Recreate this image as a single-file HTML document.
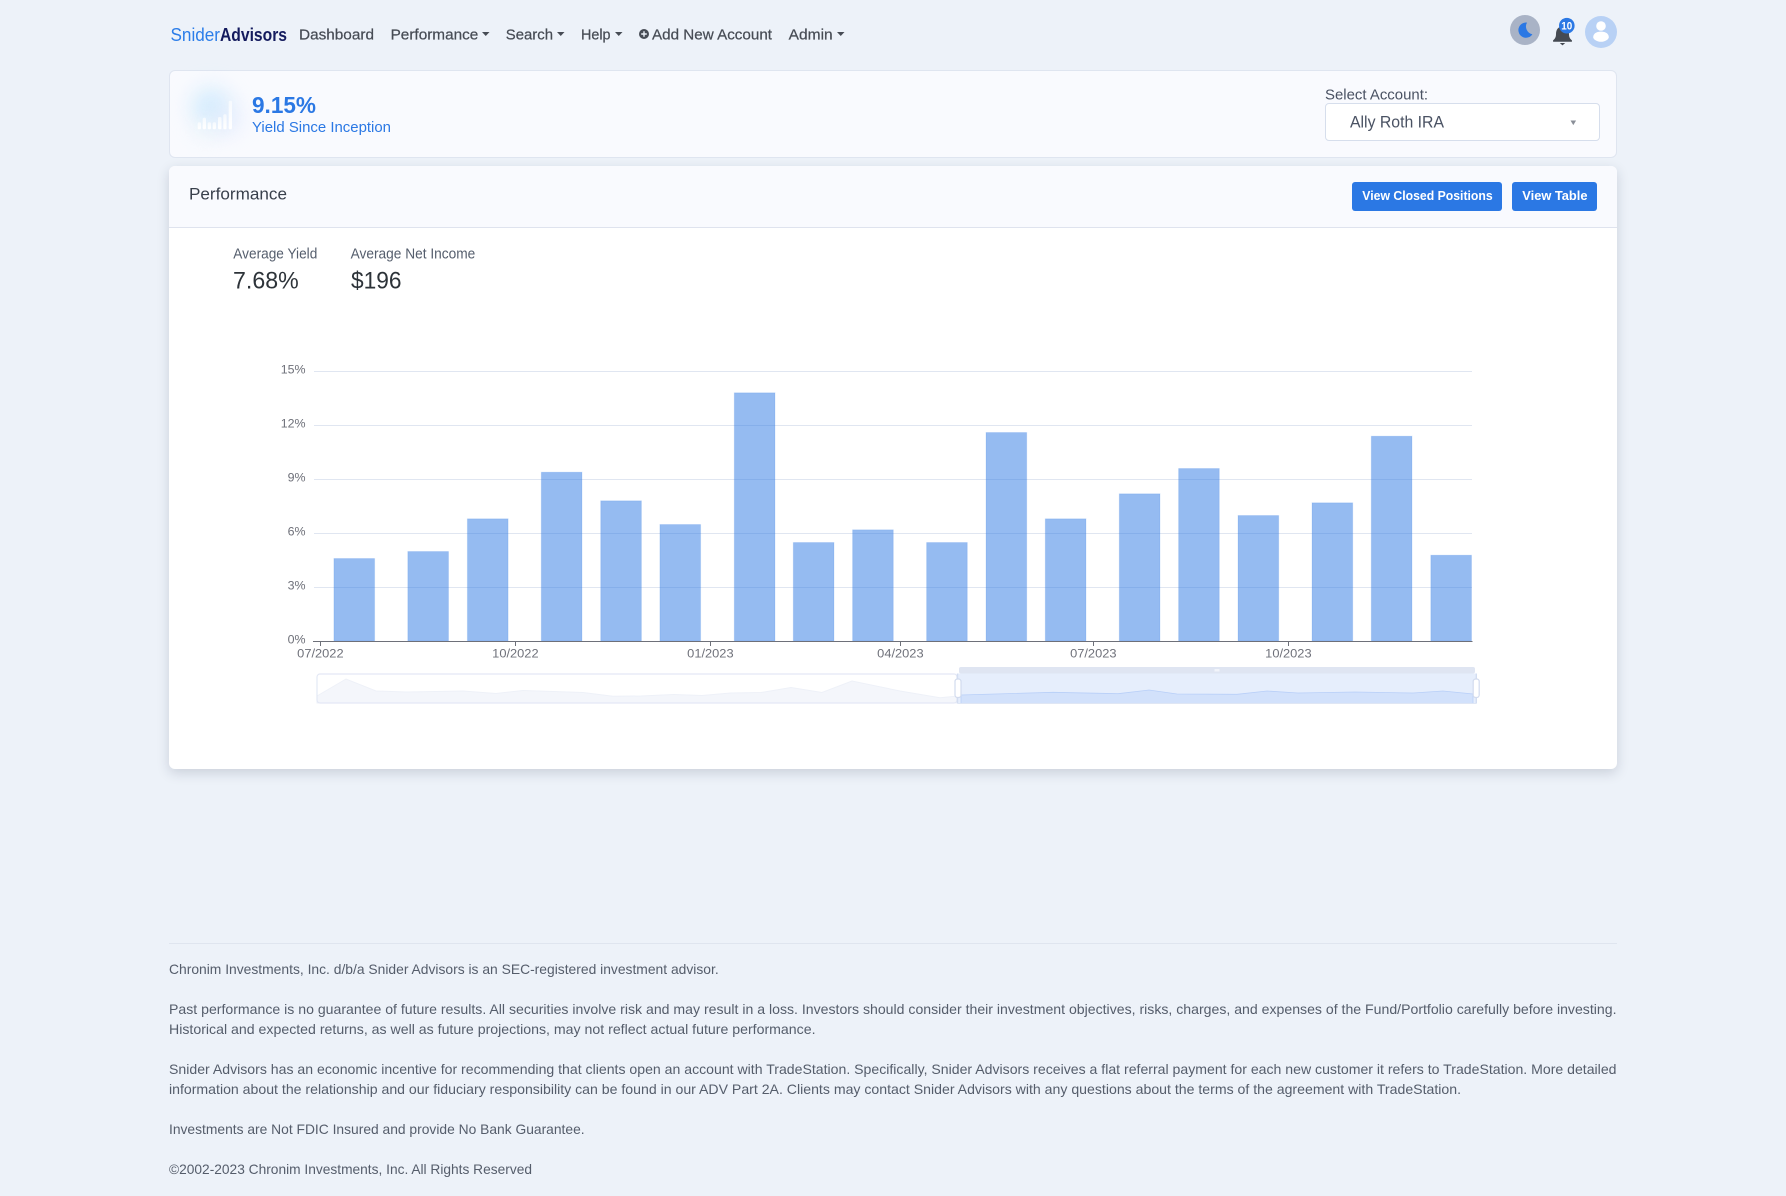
<!DOCTYPE html>
<html lang="en">
<head>
<meta charset="utf-8">
<title>Snider Advisors - Performance</title>
<style>
html,body{margin:0;padding:0;width:1786px;height:1196px;overflow:hidden;background:#edf2f9;font-family:"Liberation Sans",sans-serif}
.box{position:absolute;box-sizing:border-box}
.stat{left:169px;top:70px;width:1448px;height:88px;background:#f9fafe;border:1px solid #dfe5f0;border-radius:6px}
.card{left:169px;top:166px;width:1448px;height:603px;background:#fff;border-radius:6px;box-shadow:0 4px 12px rgba(30,40,70,.17)}
.cardhead{left:0;top:0;width:1448px;height:62px;background:#f9fafe;border-bottom:1px solid #dfe3ee;border-radius:6px 6px 0 0}
.select{left:1325px;top:103px;width:275px;height:38px;background:#fff;border:1px solid #d6deec;border-radius:4px}
.btn{background:#2b78e4;border-radius:3px;top:182px;height:29px}
.hr{left:169px;top:943px;width:1448px;height:1px;background:#dfe5ef}
.blob{border-radius:50%;filter:blur(11px)}
svg{position:absolute;left:0;top:0}
text{font-family:"Liberation Sans",sans-serif}
.nav{font-size:14.6px;fill:#474c55;stroke:#474c55;stroke-width:.22px}
.foot{font-size:13.6px;fill:#555d6b}
.ax{font-size:12.4px;fill:#6e7079}
</style>
</head>
<body>
<div class="box stat"></div>
<div class="box blob" style="left:192px;top:88px;width:38px;height:38px;background:#d3ecfd"></div>
<div class="box blob" style="left:214px;top:106px;width:24px;height:26px;background:#e2eafd"></div>
<div class="box blob" style="left:197px;top:126px;width:16px;height:12px;background:#e8f6f6"></div>
<div class="box select"></div>
<div class="box card"><div class="box cardhead"></div></div>
<div class="box btn" style="left:1352px;width:150px"></div>
<div class="box btn" style="left:1512px;width:85px"></div>
<div class="box hr"></div>

<svg width="1786" height="1196" viewBox="0 0 1786 1196" xmlns="http://www.w3.org/2000/svg">
<defs>
<linearGradient id="fade" x1="0" y1="0" x2="0" y2="1"><stop offset="0" stop-color="#fff" stop-opacity=".6"/><stop offset="1" stop-color="#fff" stop-opacity="1"/></linearGradient>
</defs>

<!-- nav -->
<text x="170.5" y="41" font-size="18" fill="#2b7de9" textLength="49.5" lengthAdjust="spacingAndGlyphs">Snider</text>
<text x="220" y="41" font-size="18" font-weight="700" fill="#141b5e" textLength="67" lengthAdjust="spacingAndGlyphs">Advisors</text>
<text class="nav" x="299" y="39.3" textLength="75" lengthAdjust="spacingAndGlyphs">Dashboard</text>
<text class="nav" x="390.6" y="39.3" textLength="87.7" lengthAdjust="spacingAndGlyphs">Performance</text>
<path d="M482 32h7.5l-3.75 4z" fill="#474c55"/>
<text class="nav" x="505.8" y="39.3" textLength="47.2" lengthAdjust="spacingAndGlyphs">Search</text>
<path d="M557 32h7.5l-3.75 4z" fill="#474c55"/>
<text class="nav" x="581" y="39.3" textLength="29.5" lengthAdjust="spacingAndGlyphs">Help</text>
<path d="M615 32h7.5l-3.75 4z" fill="#474c55"/>
<circle cx="644" cy="34" r="5" fill="#474c55"/><path d="M644 31.2v5.6M641.2 34h5.6" stroke="#edf2f9" stroke-width="1.4"/>
<text class="nav" x="652" y="39.3" textLength="120" lengthAdjust="spacingAndGlyphs">Add New Account</text>
<text class="nav" x="788.7" y="39.3" textLength="44" lengthAdjust="spacingAndGlyphs">Admin</text>
<path d="M837 32h7.5l-3.75 4z" fill="#474c55"/>

<!-- top right icons -->
<circle cx="1525" cy="30" r="15" fill="#a9b3c6"/>
<path d="M1527 22.6a7.6 7.6 0 1 0 5.4 11.6a7.8 7.8 0 0 1-5.4-11.6z" fill="#2b78e4"/>
<path d="M1562.5 26.5c-4.6 0-6.5 3.6-6.5 7.6c0 3-1 4.6-2.9 6.2v1.4h18.8v-1.4c-1.9-1.6-2.9-3.2-2.9-6.2c0-4-1.9-7.6-6.5-7.6z" fill="#454a52"/>
<path d="M1559.8 43h5.4l-2.7 2.4z" fill="#454a52"/>
<circle cx="1566.8" cy="25.7" r="7.8" fill="#2b78e4"/>
<text x="1566.8" y="29.6" font-size="11" font-weight="700" fill="#fff" text-anchor="middle" textLength="11" lengthAdjust="spacingAndGlyphs">10</text>
<circle cx="1601" cy="32" r="16" fill="#b8d1f5"/>
<circle cx="1601" cy="26" r="4.8" fill="#fff"/>
<path d="M1593.2 37.2c0-3.4 3-5.6 7.8-5.6s7.8 2.2 7.8 5.6c0 2-3.6 4.6-7.8 4.6s-7.8-2.6-7.8-4.6z" fill="#fff"/>

<!-- stat -->
<g fill="url(#fade)">
<rect x="197.7" y="122.3" width="3.3" height="7" rx="1.4"/>
<rect x="202.7" y="117.7" width="3.3" height="11.6" rx="1.4"/>
<rect x="207.7" y="122.3" width="3.3" height="7" rx="1.4"/>
<rect x="212.7" y="122.3" width="3.3" height="7" rx="1.4"/>
<rect x="218" y="117" width="3.5" height="12.3" rx="1.4"/>
<rect x="223.3" y="114.3" width="3.3" height="15" rx="1.4"/>
<rect x="228.7" y="100.7" width="3.3" height="28.6" rx="1.4"/>
</g>
<text x="252" y="112.8" font-size="23" font-weight="700" fill="#2b78e4" textLength="64" lengthAdjust="spacingAndGlyphs">9.15%</text>
<text x="252" y="132" font-size="14.6" fill="#2b78e4" textLength="139" lengthAdjust="spacingAndGlyphs">Yield Since Inception</text>
<text x="1325" y="99.4" font-size="14.4" fill="#4a5263" textLength="103" lengthAdjust="spacingAndGlyphs">Select Account:</text>
<text x="1350" y="127.6" font-size="16.8" fill="#4a5263" textLength="94" lengthAdjust="spacingAndGlyphs">Ally Roth IRA</text>
<path d="M1570.5 120.5h5.6l-2.8 4.6z" fill="#8a8f98"/>

<!-- card header -->
<text x="189" y="199.5" font-size="17" fill="#39404c" textLength="98" lengthAdjust="spacingAndGlyphs">Performance</text>
<text x="1362.3" y="200" font-size="13" font-weight="700" fill="#fff" textLength="130.4" lengthAdjust="spacingAndGlyphs">View Closed Positions</text>
<text x="1522.3" y="200" font-size="13" font-weight="700" fill="#fff" textLength="65.2" lengthAdjust="spacingAndGlyphs">View Table</text>

<!-- summary -->
<text x="233.3" y="258.3" font-size="14.4" fill="#555e6d" textLength="84" lengthAdjust="spacingAndGlyphs">Average Yield</text>
<text x="350.6" y="258.3" font-size="14.4" fill="#555e6d" textLength="124.7" lengthAdjust="spacingAndGlyphs">Average Net Income</text>
<text x="233" y="288.3" font-size="24" fill="#2d3339" textLength="65.7" lengthAdjust="spacingAndGlyphs">7.68%</text>
<text x="351" y="288.3" font-size="24" fill="#2d3339" textLength="50.5" lengthAdjust="spacingAndGlyphs">$196</text>

<!-- chart grid -->
<g fill="#e0e6f1">
<rect x="314" y="371" width="1158" height="1"/>
<rect x="314" y="425" width="1158" height="1"/>
<rect x="314" y="479" width="1158" height="1"/>
<rect x="314" y="533" width="1158" height="1"/>
<rect x="314" y="587" width="1158" height="1"/>
</g>
<g class="ax" text-anchor="end">
<text x="305.5" y="373.7">15%</text>
<text x="305.5" y="427.7">12%</text>
<text x="305.5" y="481.7">9%</text>
<text x="305.5" y="535.7">6%</text>
<text x="305.5" y="589.7">3%</text>
<text x="305.5" y="643.7">0%</text>
</g>

<!-- bars -->
<g transform="translate(.3 .5)" fill="#2b78e4" fill-opacity=".5" stroke="#2b78e4" stroke-opacity=".14" stroke-width="1">
<rect x="333.6" y="558" width="40.7" height="82.5"/>
<rect x="407.5" y="551" width="40.7" height="89.5"/>
<rect x="467.1" y="518.3" width="40.7" height="122.2"/>
<rect x="541" y="471.7" width="40.7" height="168.8"/>
<rect x="600.4" y="500.3" width="40.7" height="140.2"/>
<rect x="659.6" y="524" width="40.7" height="116.5"/>
<rect x="734" y="392.3" width="40.7" height="248.2"/>
<rect x="793" y="542" width="40.7" height="98.5"/>
<rect x="852.3" y="529.3" width="40.7" height="111.2"/>
<rect x="926.3" y="542" width="40.7" height="98.5"/>
<rect x="985.7" y="432" width="40.7" height="208.5"/>
<rect x="1045" y="518.3" width="40.7" height="122.2"/>
<rect x="1119" y="493.3" width="40.7" height="147.2"/>
<rect x="1178.3" y="468" width="40.7" height="172.5"/>
<rect x="1237.7" y="515" width="40.7" height="125.5"/>
<rect x="1311.7" y="502.3" width="40.7" height="138.2"/>
<rect x="1371" y="435.7" width="40.7" height="204.8"/>
<rect x="1430.5" y="554.7" width="40.7" height="85.8"/>
</g>

<!-- axis -->
<rect x="313" y="641" width="1159.5" height="1" fill="#6e7079"/>
<g fill="#6e7079">
<rect x="320" y="642" width="1" height="4"/>
<rect x="515" y="642" width="1" height="4"/>
<rect x="710" y="642" width="1" height="4"/>
<rect x="900" y="642" width="1" height="4"/>
<rect x="1093" y="642" width="1" height="4"/>
<rect x="1288" y="642" width="1" height="4"/>
</g>
<g class="ax">
<text x="297.2" y="657.7" textLength="46.4" lengthAdjust="spacingAndGlyphs">07/2022</text>
<text x="492.2" y="657.7" textLength="46.4" lengthAdjust="spacingAndGlyphs">10/2022</text>
<text x="687.2" y="657.7" textLength="46.4" lengthAdjust="spacingAndGlyphs">01/2023</text>
<text x="877.2" y="657.7" textLength="46.4" lengthAdjust="spacingAndGlyphs">04/2023</text>
<text x="1070.1" y="657.7" textLength="46.4" lengthAdjust="spacingAndGlyphs">07/2023</text>
<text x="1265.2" y="657.7" textLength="46.4" lengthAdjust="spacingAndGlyphs">10/2023</text>
</g>

<!-- datazoom -->
<path d="M317 696L346 679L376 691L406 692L436 691.5L463 691L496 693.5L523 690.5L553 691.5L583 692.5L613 696.3L641 696L673.6 694.5L702 695.5L730.7 693L761 692.5L791 687.5L822 692.5L852 681L900 691L940 697.7L958 696V703H317Z" fill="#f4f6fb" stroke="#eef1f8" stroke-width="1"/>
<rect x="317" y="674" width="640" height="29" rx="3" fill="none" stroke="#e3e8f5" stroke-width="1.2"/>
<rect x="959" y="667" width="516" height="6.5" rx="2" fill="#dfe5f2"/>
<rect x="1214.5" y="669" width="5" height="2.5" fill="#f1f4fa"/>
<rect x="957.5" y="673.5" width="519" height="30" fill="#e6eefc"/>
<path d="M961 695L1053 692.3L1118 693.7L1149 690L1177 694L1237 694.3L1267 691L1298 693L1355 692L1413 693L1443 691L1473 694V703.5H961Z" fill="#d2e1fb" stroke="#b8cff8" stroke-width=".8"/>
<path d="M957.5 673.5V703.5M1476.3 673.5V703.5" stroke="#d3ddf0" stroke-width="1.4" fill="none"/>
<path d="M957.5 703.5H1476.3" stroke="#dfe6f4" stroke-width="1"/>
<rect x="955" y="679" width="6" height="18.5" rx="2.5" fill="#fff" stroke="#d2dbee" stroke-width="1.2"/>
<rect x="1473.2" y="679" width="6" height="18.5" rx="2.5" fill="#fff" stroke="#d2dbee" stroke-width="1.2"/>

<!-- footer -->
<text class="foot" x="169" y="974" textLength="549.7" lengthAdjust="spacingAndGlyphs">Chronim Investments, Inc. d/b/a Snider Advisors is an SEC-registered investment advisor.</text>
<text class="foot" x="169" y="1014" textLength="1447.5" lengthAdjust="spacingAndGlyphs">Past performance is no guarantee of future results. All securities involve risk and may result in a loss. Investors should consider their investment objectives, risks, charges, and expenses of the Fund/Portfolio carefully before investing.</text>
<text class="foot" x="169" y="1034" textLength="646.5" lengthAdjust="spacingAndGlyphs">Historical and expected returns, as well as future projections, may not reflect actual future performance.</text>
<text class="foot" x="169" y="1074" textLength="1447.5" lengthAdjust="spacingAndGlyphs">Snider Advisors has an economic incentive for recommending that clients open an account with TradeStation. Specifically, Snider Advisors receives a flat referral payment for each new customer it refers to TradeStation. More detailed</text>
<text class="foot" x="169" y="1094" textLength="1292" lengthAdjust="spacingAndGlyphs">information about the relationship and our fiduciary responsibility can be found in our ADV Part 2A. Clients may contact Snider Advisors with any questions about the terms of the agreement with TradeStation.</text>
<text class="foot" x="169" y="1134" textLength="415.6" lengthAdjust="spacingAndGlyphs">Investments are Not FDIC Insured and provide No Bank Guarantee.</text>
<text class="foot" x="169" y="1174" textLength="363" lengthAdjust="spacingAndGlyphs">©2002-2023 Chronim Investments, Inc. All Rights Reserved</text>
</svg>
</body>
</html>
